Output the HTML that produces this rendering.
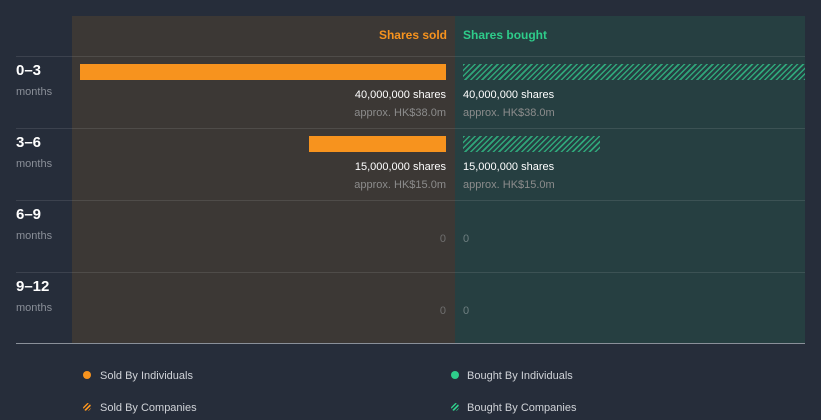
<!DOCTYPE html><html><head><style>
body{margin:0;width:821px;height:420px;background:#262d3a;font-family:"Liberation Sans",sans-serif;position:relative;overflow:hidden}
div,span{position:absolute}
.sold{left:72px;top:16px;width:383px;height:327px;background:#3c3835}
.bought{left:455px;top:16px;width:350px;height:327px;background:#263f41}
.ln{left:16px;width:789px;height:1px;background:rgba(255,255,255,0.1)}
.lab{left:16px;color:#fff;font-weight:bold;font-size:15px}
.mo{left:16px;color:#8a8f98;font-size:11px}
.r{text-align:right;right:375px;font-size:11px;white-space:nowrap}
.l{left:463px;font-size:11px;white-space:nowrap}
.w{color:#fff}.g{color:#8c8c8c}
.hatch{background:repeating-linear-gradient(135deg,#2fa67a 0 1.5px,transparent 1.5px 4px);border:0}
.lg{font-size:11px;color:#d0d3d8}
</style></head><body>
<div class="sold"></div><div class="bought"></div>
<div style="right:374px;top:28px;color:#f7931e;font-weight:bold;font-size:12px">Shares sold</div>
<div style="left:463px;top:28px;color:#2ecc8a;font-weight:bold;font-size:12px">Shares bought</div>
<div class="ln" style="top:56px;left:16px"></div>
<div class="ln" style="top:128px"></div>
<div class="ln" style="top:200px"></div>
<div class="ln" style="top:272px"></div>
<div style="left:16px;top:343px;width:789px;height:1px;background:#8a9099"></div>

<div class="lab" style="top:62px">0–3</div><div class="mo" style="top:86px">months</div>
<div class="lab" style="top:134px">3–6</div><div class="mo" style="top:158px">months</div>
<div class="lab" style="top:206px">6–9</div><div class="mo" style="top:230px">months</div>
<div class="lab" style="top:278px">9–12</div><div class="mo" style="top:302px">months</div>

<div style="left:80px;top:64px;width:366px;height:16px;background:#f7931e"></div>
<div class="hatch" style="left:463px;top:64px;width:342px;height:16px"></div>
<div class="r w" style="top:89px">40,000,000 shares</div>
<div class="r g" style="top:107px">approx. HK$38.0m</div>
<div class="l w" style="top:89px">40,000,000 shares</div>
<div class="l g" style="top:107px">approx. HK$38.0m</div>

<div style="left:309px;top:136px;width:137px;height:16px;background:#f7931e"></div>
<div class="hatch" style="left:463px;top:136px;width:137px;height:16px"></div>
<div class="r w" style="top:161px">15,000,000 shares</div>
<div class="r g" style="top:179px">approx. HK$15.0m</div>
<div class="l w" style="top:161px">15,000,000 shares</div>
<div class="l g" style="top:179px">approx. HK$15.0m</div>

<div class="r" style="top:233px;color:#6f6f6f">0</div><div class="l" style="top:233px;color:#6f7f80">0</div>
<div class="r" style="top:305px;color:#6f6f6f">0</div><div class="l" style="top:305px;color:#6f7f80">0</div>

<div style="left:83px;top:371px;width:8px;height:8px;border-radius:50%;background:#f7931e"></div>
<div class="lg" style="left:100px;top:370px">Sold By Individuals</div>
<div style="left:83px;top:403px;width:8px;height:8px;border-radius:50%;background:repeating-linear-gradient(135deg,#f7931e 0 1.5px,transparent 1.5px 3px)"></div>
<div class="lg" style="left:100px;top:402px">Sold By Companies</div>
<div style="left:451px;top:371px;width:8px;height:8px;border-radius:50%;background:#2ecc8a"></div>
<div class="lg" style="left:467px;top:370px">Bought By Individuals</div>
<div style="left:451px;top:403px;width:8px;height:8px;border-radius:50%;background:repeating-linear-gradient(135deg,#2ecc8a 0 1.5px,transparent 1.5px 3px)"></div>
<div class="lg" style="left:467px;top:402px">Bought By Companies</div>
</body></html>
